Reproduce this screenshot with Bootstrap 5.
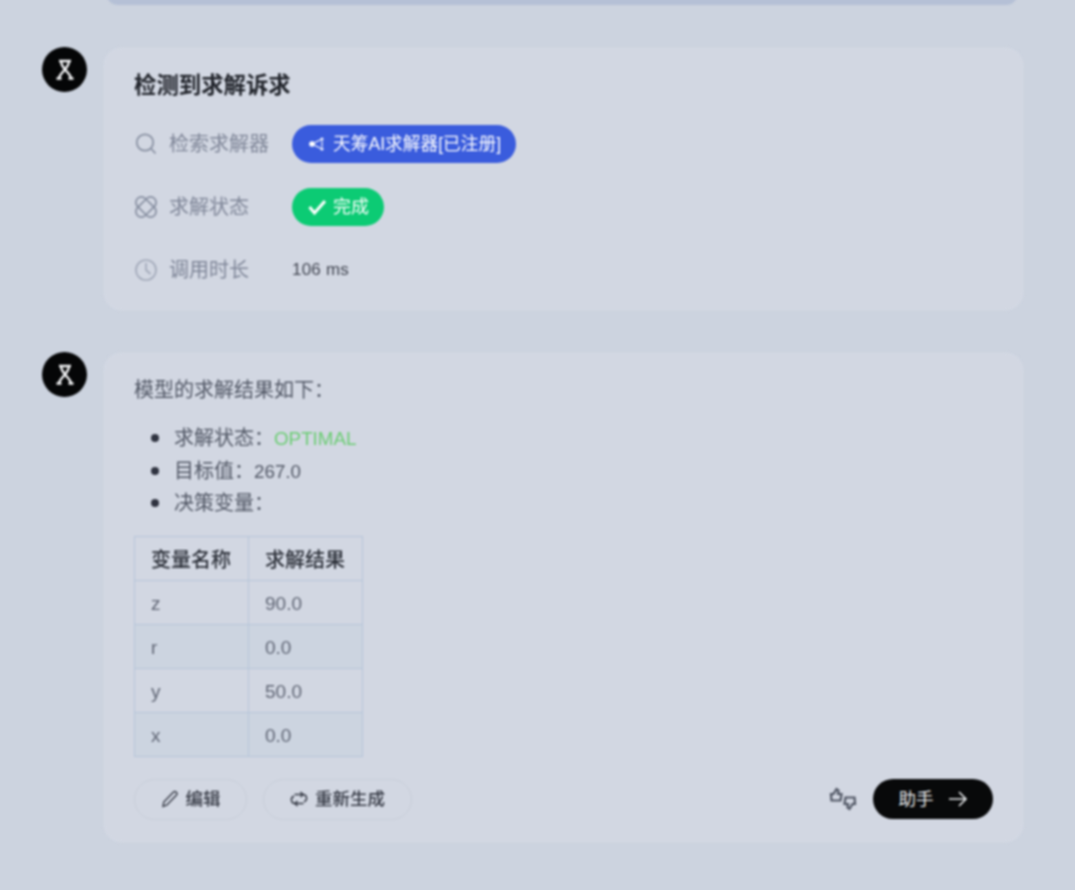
<!DOCTYPE html>
<html lang="zh">
<head>
<meta charset="utf-8">
<link href="https://cdn.jsdelivr.net/npm/bootstrap@5.3.0/dist/css/bootstrap.min.css" rel="stylesheet">
<style>
html,body{height:890px;overflow:hidden}
body{background:#ccd3df;font-family:"Liberation Sans","Noto Sans CJK SC",sans-serif;color:#515765;font-size:20px;line-height:1.6}
.page-wrap{padding:0 52px 0 42px;filter:blur(.85px);height:890px}
.prev-strip{height:10px;margin:-5px 6px 43px 65px;background:#b5c0d6;border-radius:0 0 14px 14px}
.msg-row{gap:17px;margin-bottom:43px;align-items:flex-start}
.avatar{width:45px;height:45px;flex:none;background:#050607;border-radius:50%;margin-top:-1px}
.bubble{flex:1;background:#d2d7e2;border-radius:18px;box-shadow:0 0 2px rgba(220,225,235,.8);padding:0 30px}
.bubble-a{height:262px;padding-top:21px}
.bubble-b{height:489px;padding-top:21px}
.title-line{font-size:22.4px;font-weight:700;line-height:32px;color:#22252c;margin-top:1px;margin-bottom:23px}
.info-row{height:38px;margin-bottom:25px;align-items:center}
.info-ico{width:24px;height:24px;margin-right:11px;flex:none;color:#868ea0}
.info-label{width:123px;flex:none;color:#7f8698;font-size:20px}
.pill{height:38px;border-radius:19px;color:#fff;font-size:18px;align-items:center;padding:0 15px 0 16px;gap:7px}
.pill-blue{background:#3a5cdd;font-size:17.7px}
.pill-green{background:#0ccb74}
.dur{font-size:17px;color:#424652;letter-spacing:.2px}
.res-list{margin:0 0 16px;padding:0 0 0 40px;line-height:32.5px;list-style:none}
.res-list li{display:flex;align-items:center}
.res-list li::before{content:"";width:8px;height:8px;border-radius:50%;background:#2f3340;margin:0 15px 0 -23px;flex:none}
.latin{font-size:18.8px;line-height:1}
.intro{line-height:32px;margin-bottom:16px}
.opt{color:#6acd72}
.res-table{width:229px;border-collapse:collapse;table-layout:fixed;margin:0;font-size:19px}
.res-table th,.res-table td{border:1px solid #b6c5d9;height:44px;padding:4px 16px 0;vertical-align:middle;font-weight:400;color:#5f6574;background:transparent}
.res-table th{font-size:20px;color:#2c3039;font-weight:500;padding-top:3px}
.res-table .stripe td{background:#ccd4e0}
.act-row{margin-top:22px;height:41px;align-items:center}
.ghost{height:41px;border:1px solid #c8ced9;border-radius:21px;background:transparent;font-size:17.5px;color:#363a45;padding:0;align-items:center;justify-content:center;gap:7px;font-weight:500}
.ghost-a{width:113px}
.ghost-b{width:149px;margin-left:16px}
.thumbs{margin-right:16px;color:#4f5563}
.go{width:120px;height:40px;border:0;border-radius:20px;background:#08090a;color:#e9ebee;font-size:17.5px;align-items:center;justify-content:center;gap:14px;padding:0}
</style>
</head>
<body>
<div class="page-wrap">
  <div class="prev-strip"></div>

  <div class="d-flex msg-row">
    <div class="avatar d-flex align-items-center justify-content-center">
      <svg width="26" height="26" viewBox="0 0 26 26" fill="none" stroke="#f1f2f4" stroke-width="2.4"><path d="M7 4h12M9 4c0 4 1.500 5 4 8.500 2.500 3 5 5 6 8M17 4c0 4-1.500 5-4 8.500-2.500 3-5 5-6 8M4.500 21.500h5M16.500 21.500h5"/></svg>
    </div>
    <div class="bubble bubble-a">
      <div class="title-line">检测到求解诉求</div>
      <div class="d-flex info-row">
        <svg class="info-ico" viewBox="0 0 24 24" fill="none" stroke="currentColor" stroke-width="1.7"><circle cx="11" cy="10.500" r="8.200"/><path d="M17 16.500l4.500 5"/></svg>
        <span class="info-label">检索求解器</span>
        <span class="d-inline-flex pill pill-blue">
          <svg width="18" height="18" viewBox="0 0 18 18" fill="#fff"><circle cx="4" cy="9" r="2.800"/><circle cx="14" cy="4" r="1.500"/><circle cx="14" cy="14" r="1.500"/><path d="M4 9L14 4M4 9l10 5M14 6v6" stroke="#fff" stroke-width="1.100"/></svg>
          天筹AI求解器[已注册]
        </span>
      </div>
      <div class="d-flex info-row">
        <svg class="info-ico" viewBox="0 0 24 24" fill="none" stroke="currentColor" stroke-width="1.7"><rect x="0" y="6.500" width="24" height="11" rx="5.500" transform="rotate(45 12 12)"/><rect x="0" y="6.500" width="24" height="11" rx="5.500" transform="rotate(-45 12 12)"/></svg>
        <span class="info-label">求解状态</span>
        <span class="d-inline-flex pill pill-green">
          <svg width="18" height="18" viewBox="0 0 18 18" fill="none" stroke="#fff" stroke-width="3"><path d="M1.500 9l5 6L17 3"/></svg>
          完成
        </span>
      </div>
      <div class="d-flex info-row">
        <svg class="info-ico" viewBox="0 0 24 24" fill="none" stroke="#a3aaba" stroke-width="1.700"><circle cx="12" cy="12" r="10"/><path d="M12 5v7l4.500 4"/></svg>
        <span class="info-label">调用时长</span>
        <span class="dur">106 ms</span>
      </div>
    </div>
  </div>

  <div class="d-flex msg-row">
    <div class="avatar d-flex align-items-center justify-content-center">
      <svg width="26" height="26" viewBox="0 0 26 26" fill="none" stroke="#f1f2f4" stroke-width="2.4"><path d="M7 4h12M9 4c0 4 1.500 5 4 8.500 2.500 3 5 5 6 8M17 4c0 4-1.500 5-4 8.500-2.500 3-5 5-6 8M4.500 21.500h5M16.500 21.500h5"/></svg>
    </div>
    <div class="bubble bubble-b">
      <div class="intro">模型的求解结果如下&#xFF1A;</div>
      <ul class="res-list">
        <li><span>求解状态&#xFF1A;<span class="opt latin">OPTIMAL</span></span></li>
        <li><span>目标值&#xFF1A;<span class="latin">267.0</span></span></li>
        <li><span>决策变量&#xFF1A;</span></li>
      </ul>
      <table class="res-table">
        <thead><tr><th>变量名称</th><th>求解结果</th></tr></thead>
        <tbody>
          <tr><td>z</td><td>90.0</td></tr>
          <tr class="stripe"><td>r</td><td>0.0</td></tr>
          <tr><td>y</td><td>50.0</td></tr>
          <tr class="stripe"><td>x</td><td>0.0</td></tr>
        </tbody>
      </table>
      <div class="d-flex act-row">
        <button class="btn d-inline-flex ghost ghost-a">
          <svg width="18" height="18" viewBox="0 0 18 18" fill="none" stroke="currentColor" stroke-width="1.400"><path d="M2 16.500l.8-4.500L12.500 2c1-.8 2-.5 2.800.3s1 1.800.2 2.700L6 15z"/></svg>编辑</button>
        <button class="btn d-inline-flex ghost ghost-b">
          <svg width="18" height="16" viewBox="0 0 18 16" fill="none" stroke="currentColor" stroke-width="1.500"><path d="M4.500 3.500h8a3.700 3.700 0 0 1 1.500 7.200M13.500 12.500h-8A3.700 3.700 0 0 1 4 5.300"/><path d="M10.500 1l2.500 2.500L10.500 6M7.500 10l-2.500 2.500L7.500 15"/></svg>重新生成</button>
        <div class="ms-auto d-flex align-items-center">
          <svg class="thumbs" width="28" height="24" viewBox="0 0 28 24" fill="none" stroke="currentColor" stroke-width="2.200"><path d="M2 7h2.500L7.500 2l2 1.500-.5 3.500h3.500l-1 6.500H2.500z"/><path d="M26 17h-2.500l-3 5-2-1.500.5-3.500h-3.500l1-6.500h9z"/></svg>
          <button class="btn d-inline-flex go">助手
            <svg width="20" height="18" viewBox="0 0 20 18" fill="none" stroke="currentColor" stroke-width="1.600"><path d="M1 9h17M11 2l7 7-7 7"/></svg>
          </button>
        </div>
      </div>
    </div>
  </div>
</div>
</body>
</html>
